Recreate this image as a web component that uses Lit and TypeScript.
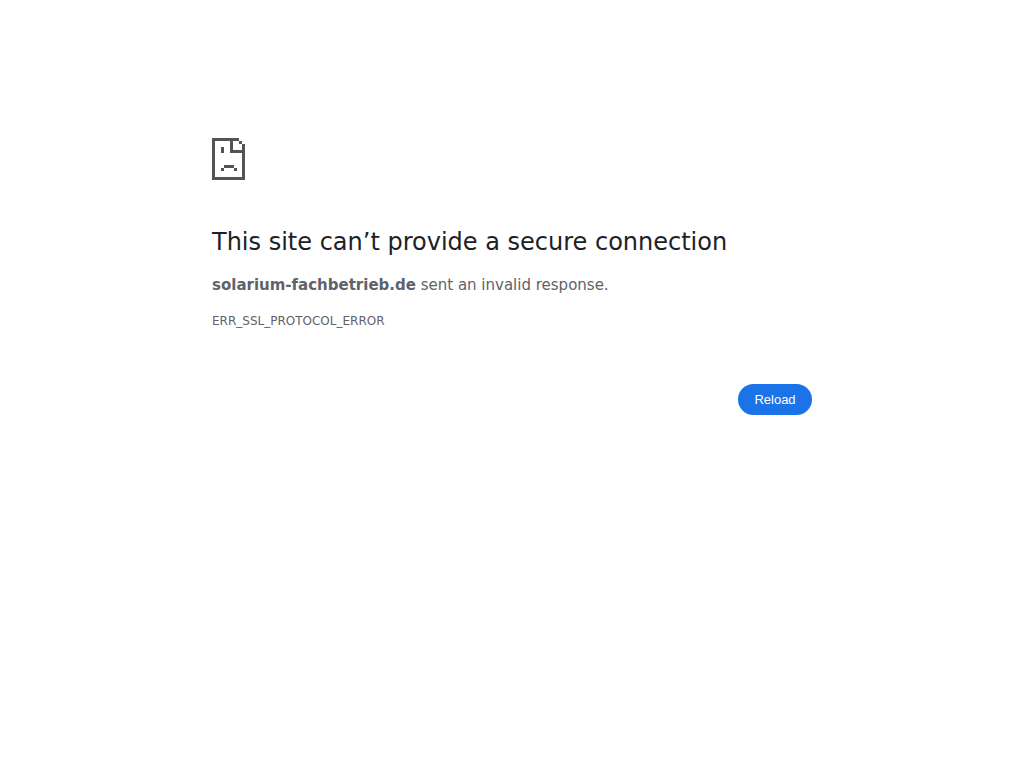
import { LitElement, html, css } from "lit";
import { customElement, property } from "lit/decorators.js";

@customElement("app-root")
export class AppRoot extends LitElement {
  @property() host = "solarium-fachbetrieb.de";
  @property() code = "ERR_SSL_PROTOCOL_ERROR";

  static styles = css`
    :host {
      display: block;
      min-height: 100vh;
      background: #fff;
      color: #5f6368;
      font: 15px/24px "DejaVu Sans", sans-serif;
    }
    .page {
      box-sizing: border-box;
      max-width: 600px;
      margin: 0 auto;
      padding-top: 138px;
    }
    .icon {
      display: block;
      width: 33px;
      height: 42px;
      margin-bottom: 47px;
      fill: #535456;
    }
    h1 {
      margin: 0 0 16px;
      color: #202124;
      font-size: 24px;
      font-weight: 400;
      line-height: 30px;
    }
    p {
      margin: 0;
    }
    .code {
      margin-top: 14px;
      font-size: 12px;
      line-height: 20px;
    }
    .actions {
      display: flex;
      justify-content: flex-end;
      margin-top: 53px;
    }
    button {
      min-width: 74px;
      padding: 8px 16px;
      border: 0;
      border-radius: 20px;
      background: #1a73e8;
      color: #fff;
      font-family: "Liberation Sans", Arial, sans-serif;
      font-size: 13px;
      cursor: pointer;
    }
    button:hover {
      background: #1765cc;
    }
  `;

  render() {
    return html`
      <main class="page">
        <svg class="icon" viewBox="0 0 33 42" shape-rendering="crispEdges" aria-hidden="true">
          <path
            d="M0 0h27v3h3v3h3v36H0zM3 3v36h27V15H18V3zM21 3v9h9V6h-3V3z"
            fill-rule="evenodd"
          />
          <path d="M9 9h3v6H9zM12 27h10v3H12zM9 30h3v3H9zM22 30h3v3h-3z" />
        </svg>
        <h1>This site can’t provide a secure connection</h1>
        <p><strong>${this.host}</strong> sent an invalid response.</p>
        <p class="code">${this.code}</p>
        <div class="actions">
          <button type="button" @click=${() => location.reload()}>Reload</button>
        </div>
      </main>
    `;
  }
}
